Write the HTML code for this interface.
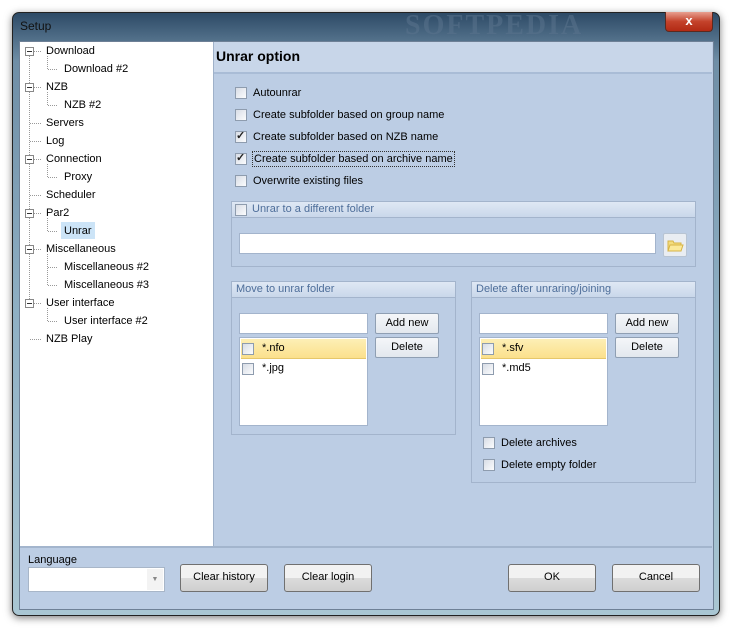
<!DOCTYPE html>
<html><head><style>
body{margin:0;width:739px;height:636px;background:#fff;position:relative;overflow:hidden;font-family:"Liberation Sans",sans-serif;font-size:11px;color:#000}
.a{position:absolute}
.win{left:12px;top:12px;width:706px;height:602px;border-radius:7px;background:linear-gradient(#2d4a66,#6f8ea6 8%,#8fb0c4 50%,#a9c6d3);box-shadow:0 2px 8px rgba(0,0,0,.5);border:1px solid #222}
.cb{position:absolute;width:10px;height:10px;border:1px solid #8e9cae;background:linear-gradient(135deg,#d8dde6,#fbfcfd)}
.ck::after{content:"✓";position:absolute;left:0;top:-3px;font-size:11px;font-weight:bold;color:#222}
.grp{position:absolute;border:1px solid #a3b4cc}
.gh{position:absolute;left:0;right:0;top:0;height:15px;background:linear-gradient(#dfe8f4,#c9d7ea);border-bottom:1px solid #a3b4cc;color:#4e6e9a;padding-left:4px;line-height:15px;font-size:11px}
.tb{position:absolute;background:#fff;border:1px solid #a3b4cc;box-sizing:border-box}
.btn{position:absolute;box-sizing:border-box;border:1px solid #8f9fb3;border-radius:2px;background:linear-gradient(#f4f6f9,#e3e8ee);text-align:center;font-size:11px}
.wb{position:absolute;box-sizing:border-box;border:1px solid #707070;border-radius:3px;background:linear-gradient(#f2f2f2 50%,#dcdcdc 50%,#cfcfcf);text-align:center;line-height:25px;font-size:11px}
.t{position:absolute;line-height:14px;white-space:nowrap}
</style></head><body>
<div class="a win"></div>
<div class="t" style="left:20px;top:19px;color:#111;font-size:12px">Setup</div>
<div class="t" style="left:405px;top:11px;font-size:28px;font-family:'Liberation Serif',serif;font-weight:bold;color:rgba(90,115,140,.55);letter-spacing:2px;line-height:30px">SOFTPEDIA</div>
<div class="a" style="left:665px;top:12px;width:46px;height:19px;border:1px solid #5a2a20;border-top:none;border-radius:0 0 4px 4px;background:linear-gradient(#e8a090,#c4422b 50%,#b22a14);color:#fff;text-align:center;font-weight:bold;font-size:13px;line-height:18px">x</div>
<div class="a" style="left:19px;top:41px;width:693px;height:567px;background:#bccde4;border:1px solid #6e8096"></div>
<div class="a" style="left:20px;top:42px;width:193px;height:504px;background:#fff;border-right:1px solid #9fb1c9"></div>
<div class="a" style="left:214px;top:42px;width:498px;height:30px;background:#c8d6e9;border-bottom:2px solid #a9bcd6"></div>
<div class="t" style="left:216px;top:48px;font-size:14px;font-weight:bold;line-height:16px">Unrar option</div>
<div class="a" style="left:20px;top:546px;width:692px;border-top:2px solid #a3b5cd"></div>
<!-- tree -->
<svg class="a" style="left:20px;top:42px" width="60" height="310">
<g stroke="#999" stroke-dasharray="1,1" fill="none">
<line x1="9.5" y1="14" x2="9.5" y2="262"/>
<line x1="14" y1="9.5" x2="22" y2="9.5"/><line x1="14" y1="45.5" x2="22" y2="45.5"/><line x1="10" y1="81.5" x2="22" y2="81.5"/><line x1="10" y1="99.5" x2="22" y2="99.5"/><line x1="14" y1="117.5" x2="22" y2="117.5"/><line x1="10" y1="153.5" x2="22" y2="153.5"/><line x1="14" y1="171.5" x2="22" y2="171.5"/><line x1="14" y1="207.5" x2="22" y2="207.5"/><line x1="14" y1="261.5" x2="22" y2="261.5"/><line x1="10" y1="297.5" x2="22" y2="297.5"/>
<path d="M27.5 14V27.5H38M27.5 50V63.5H38M27.5 122V135.5H38M27.5 176V189.5H38M27.5 212V243.5H38M27.5 266V279.5H38"/>
<line x1="28" y1="225.5" x2="38" y2="225.5"/>
</g>
<g fill="#fff" stroke="#888"><rect x="5.5" y="5.5" width="8" height="8"/><rect x="5.5" y="41.5" width="8" height="8"/><rect x="5.5" y="113.5" width="8" height="8"/><rect x="5.5" y="167.5" width="8" height="8"/><rect x="5.5" y="203.5" width="8" height="8"/><rect x="5.5" y="257.5" width="8" height="8"/></g>
<g stroke="#333"><line x1="7" y1="9.5" x2="12" y2="9.5"/><line x1="7" y1="45.5" x2="12" y2="45.5"/><line x1="7" y1="117.5" x2="12" y2="117.5"/><line x1="7" y1="171.5" x2="12" y2="171.5"/><line x1="7" y1="207.5" x2="12" y2="207.5"/><line x1="7" y1="261.5" x2="12" y2="261.5"/></g>
</svg>
<div class="a" style="left:61px;top:222px;width:34px;height:17px;background:#cce4f7"></div>
<div class="t" style="left:46px;top:44px">Download</div>
<div class="t" style="left:64px;top:62px">Download #2</div>
<div class="t" style="left:46px;top:80px">NZB</div>
<div class="t" style="left:64px;top:98px">NZB #2</div>
<div class="t" style="left:46px;top:116px">Servers</div>
<div class="t" style="left:46px;top:134px">Log</div>
<div class="t" style="left:46px;top:152px">Connection</div>
<div class="t" style="left:64px;top:170px">Proxy</div>
<div class="t" style="left:46px;top:188px">Scheduler</div>
<div class="t" style="left:46px;top:206px">Par2</div>
<div class="t" style="left:64px;top:224px">Unrar</div>
<div class="t" style="left:46px;top:242px">Miscellaneous</div>
<div class="t" style="left:64px;top:260px">Miscellaneous #2</div>
<div class="t" style="left:64px;top:278px">Miscellaneous #3</div>
<div class="t" style="left:46px;top:296px">User interface</div>
<div class="t" style="left:64px;top:314px">User interface #2</div>
<div class="t" style="left:46px;top:332px">NZB Play</div>
<!-- checks -->
<div class="cb" style="left:235px;top:87px"></div><div class="t" style="left:253px;top:86px">Autounrar</div>
<div class="cb" style="left:235px;top:109px"></div><div class="t" style="left:253px;top:108px">Create subfolder based on group name</div>
<div class="cb ck" style="left:235px;top:131px"></div><div class="t" style="left:253px;top:130px">Create subfolder based on NZB name</div>
<div class="cb ck" style="left:235px;top:153px"></div><div class="t" style="left:252px;top:151px;border:1px dotted #333;padding:0 1px">Create subfolder based on archive name</div>
<div class="cb" style="left:235px;top:175px"></div><div class="t" style="left:253px;top:174px">Overwrite existing files</div>
<!-- group 1 -->
<div class="grp" style="left:231px;top:201px;width:463px;height:64px"><div class="gh" style="padding-left:20px">Unrar to a different folder</div></div>
<div class="cb" style="left:235px;top:204px"></div>
<div class="tb" style="left:239px;top:233px;width:417px;height:21px"></div>
<div class="btn" style="left:663px;top:233px;width:24px;height:24px;background:#e9edf2;border-color:#b8c4d2"><svg width="20" height="20" style="margin-top:1px"><path d="M3 6h5l1 2h7v8H3z" fill="#f3dc7e" stroke="#d7b445"/><path d="M3 16l2-6h13l-2 6z" fill="#fbe99a" stroke="#d7b445"/></svg></div>
<!-- group 2 -->
<div class="grp" style="left:231px;top:281px;width:223px;height:152px"><div class="gh">Move to unrar folder</div></div>
<div class="tb" style="left:239px;top:313px;width:129px;height:21px"></div>
<div class="tb" style="left:239px;top:337px;width:129px;height:89px"></div>
<div class="a" style="left:241px;top:339px;width:125px;height:19px;background:linear-gradient(#fdefb5,#fbe08c);border-bottom:1px solid #e6c76a"></div>
<div class="cb" style="left:242px;top:343px"></div><div class="t" style="left:262px;top:341px">*.nfo</div>
<div class="cb" style="left:242px;top:363px"></div><div class="t" style="left:262px;top:361px">*.jpg</div>
<div class="btn" style="left:375px;top:313px;width:64px;height:21px;line-height:19px">Add new</div>
<div class="btn" style="left:375px;top:337px;width:64px;height:21px;line-height:19px">Delete</div>
<!-- group 3 -->
<div class="grp" style="left:471px;top:281px;width:223px;height:200px"><div class="gh">Delete after unraring/joining</div></div>
<div class="tb" style="left:479px;top:313px;width:129px;height:21px"></div>
<div class="tb" style="left:479px;top:337px;width:129px;height:89px"></div>
<div class="a" style="left:481px;top:339px;width:125px;height:19px;background:linear-gradient(#fdefb5,#fbe08c);border-bottom:1px solid #e6c76a"></div>
<div class="cb" style="left:482px;top:343px"></div><div class="t" style="left:502px;top:341px">*.sfv</div>
<div class="cb" style="left:482px;top:363px"></div><div class="t" style="left:502px;top:361px">*.md5</div>
<div class="btn" style="left:615px;top:313px;width:64px;height:21px;line-height:19px">Add new</div>
<div class="btn" style="left:615px;top:337px;width:64px;height:21px;line-height:19px">Delete</div>
<div class="cb" style="left:483px;top:437px"></div><div class="t" style="left:501px;top:436px">Delete archives</div>
<div class="cb" style="left:483px;top:459px"></div><div class="t" style="left:501px;top:458px">Delete empty folder</div>
<!-- bottom -->
<div class="t" style="left:28px;top:553px">Language</div>
<div class="tb" style="left:28px;top:567px;width:137px;height:25px;border-color:#a8b6c8"><span style="position:absolute;right:1px;top:1px;width:16px;height:21px;background:#f3f3f3;color:#888;font-size:7px;text-align:center;line-height:21px">▼</span></div>
<div class="wb" style="left:180px;top:564px;width:88px;height:28px">Clear history</div>
<div class="wb" style="left:284px;top:564px;width:88px;height:28px">Clear login</div>
<div class="wb" style="left:508px;top:564px;width:88px;height:28px">OK</div>
<div class="wb" style="left:612px;top:564px;width:88px;height:28px">Cancel</div>
</body></html>
